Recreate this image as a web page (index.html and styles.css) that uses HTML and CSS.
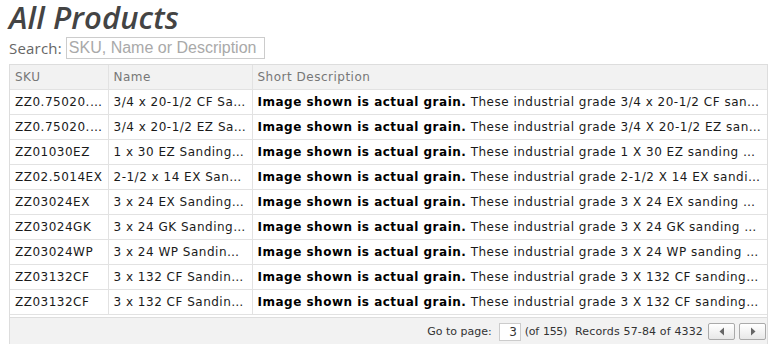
FILE: index.html
```html
<!DOCTYPE html>
<html lang="en">
<head>
    <meta charset="UTF-8">
    <title>All Products</title>
    <link rel="stylesheet" href="styles.css">
</head>
<body>
<div id="page">
    <h1 class="title">All Products</h1>
    <div class="search">
        <label for="q">Search:</label>
        <input id="q" type="text" placeholder="SKU, Name or Description">
    </div>
    <div class="grid">
        <table class="products">
            <colgroup>
                <col class="c-sku"><col class="c-name"><col>
            </colgroup>
            <thead>
                <tr><th>SKU</th><th>Name</th><th>Short Description</th></tr>
            </thead>
            <tbody>
                <tr><td>ZZ0.75020.1/2CF</td><td>3/4 x 20-1/2 CF Sanding Belt</td><td><b>Image shown is actual grain.</b> These industrial grade 3/4 x 20-1/2 CF sanding belts are made for heavy use</td></tr>
                <tr><td>ZZ0.75020.1/2EZ</td><td>3/4 x 20-1/2 EZ Sanding Belt</td><td><b>Image shown is actual grain.</b> These industrial grade 3/4 X 20-1/2 EZ sanding belts are made for heavy use</td></tr>
                <tr><td>ZZ01030EZ</td><td>1 x 30 EZ Sanding Belt</td><td><b>Image shown is actual grain.</b> These industrial grade 1 X 30 EZ sanding belts are made for heavy use</td></tr>
                <tr><td>ZZ02.5014EX</td><td>2-1/2 x 14 EX Sanding Belt</td><td><b>Image shown is actual grain.</b> These industrial grade 2-1/2 X 14 EX sanding belts are made for heavy use</td></tr>
                <tr><td>ZZ03024EX</td><td>3 x 24 EX Sanding Belt</td><td><b>Image shown is actual grain.</b> These industrial grade 3 X 24 EX sanding belts are made for heavy use</td></tr>
                <tr><td>ZZ03024GK</td><td>3 x 24 GK Sanding Belt</td><td><b>Image shown is actual grain.</b> These industrial grade 3 X 24 GK sanding belts are made for heavy use</td></tr>
                <tr><td>ZZ03024WP</td><td>3 x 24 WP Sanding Belt</td><td><b>Image shown is actual grain.</b> These industrial grade 3 X 24 WP sanding belts are made for heavy use</td></tr>
                <tr><td>ZZ03132CF</td><td>3 x 132 CF Sanding Belt</td><td><b>Image shown is actual grain.</b> These industrial grade 3 X 132 CF sanding belts are made for heavy use</td></tr>
                <tr><td>ZZ03132CF</td><td>3 x 132 CF Sanding Belt</td><td><b>Image shown is actual grain.</b> These industrial grade 3 X 132 CF sanding belts are made for heavy use</td></tr>
            </tbody>
        </table>
        <div class="pager">
            <span class="goto">Go to page:</span>
            <input class="page-box" type="text" value="3">
            <span class="of">(of 155)</span>
            <span class="records">Records 57-84 of 4332</span>
            <span class="btns">
                <a class="btn"><svg width="8" height="9" viewBox="0 0 8 9"><path d="M6 0.5 L1.5 4.5 L6 8.5 Z" fill="#666"/></svg></a>
                <a class="btn"><svg width="8" height="9" viewBox="0 0 8 9"><path d="M2 0.5 L6.5 4.5 L2 8.5 Z" fill="#666"/></svg></a>
            </span>
        </div>
    </div>
</div>
</body>
</html>
```

FILE: styles.css
```css
body {
    margin: 0;
    background: #fff;
}
#page {
    width: 759px;
    padding: 0 0 0 9px;
}
.title {
    margin: 0;
    padding-top: 1px;
    height: 33px;
    font: italic 600 31px/33px "Open Sans", sans-serif;
    color: #444;
    letter-spacing: 0.1px;
}
.search {
    display: flex;
    align-items: center;
    gap: 4px;
    height: 26px;
    margin-top: 1px;
}
.search label {
    font: 15px "Open Sans", sans-serif;
    color: #666;
    letter-spacing: 0.2px;
}
.search input {
    width: 193px;
    height: 18px;
    padding: 1px 2px;
    border: 1px solid #ccc;
    font: 16px "Liberation Sans", Arial, sans-serif;
    color: #333;
    outline: none;
}
.search input::placeholder {
    color: #a9a9a9;
}
.grid {
    margin-top: 3px;
    border: 1px solid #ddd;
}
.products {
    width: 100%;
    table-layout: fixed;
    border-collapse: collapse;
    font: 12px "DejaVu Sans", Verdana, sans-serif;
    letter-spacing: 0.5px;
}
.c-sku {
    width: 98px;
}
.c-name {
    width: 144px;
}
.products th,
.products td {
    height: 24px;
    padding: 0 5px;
    border: 1px solid #e2e2e2;
    white-space: nowrap;
    overflow: hidden;
    text-overflow: ellipsis;
    text-align: left;
}
.products tr > :first-child {
    border-left: 0;
}
.products tr > :last-child {
    border-right: 0;
}
.products thead tr > * {
    border-top: 0;
}
.products th {
    background: #f2f2f2;
    font-weight: normal;
    color: #777;
}
.products td {
    color: #1a1a1a;
}
.products b {
    color: #000;
}
.pager {
    display: flex;
    justify-content: flex-end;
    align-items: center;
    height: 27px;
    margin-top: 2px;
    padding-right: 1px;
    background: #f2f2f2;
    border-top: 1px solid #ddd;
    font: 11px "DejaVu Sans", Verdana, sans-serif;
    letter-spacing: 0.15px;
    color: #333;
}
.goto {
    letter-spacing: 0;
}
.page-box {
    box-sizing: border-box;
    width: 22px;
    height: 18px;
    margin-left: 7px;
    padding: 0 3px;
    border: 1px solid #ccc;
    text-align: right;
    font: 12px "DejaVu Sans", Verdana, sans-serif;
    color: #333;
}
.of {
    margin-left: 4px;
    letter-spacing: -0.3px;
    word-spacing: 1px;
}
.records {
    margin-left: 8px;
}
.btns {
    display: flex;
    gap: 4px;
    margin-left: 5px;
}
.btn {
    display: flex;
    align-items: center;
    justify-content: center;
    width: 25px;
    height: 15px;
    border: 1px solid #aaa;
    border-radius: 2px;
    background: linear-gradient(#fff, #e8e8e8);
}
```
